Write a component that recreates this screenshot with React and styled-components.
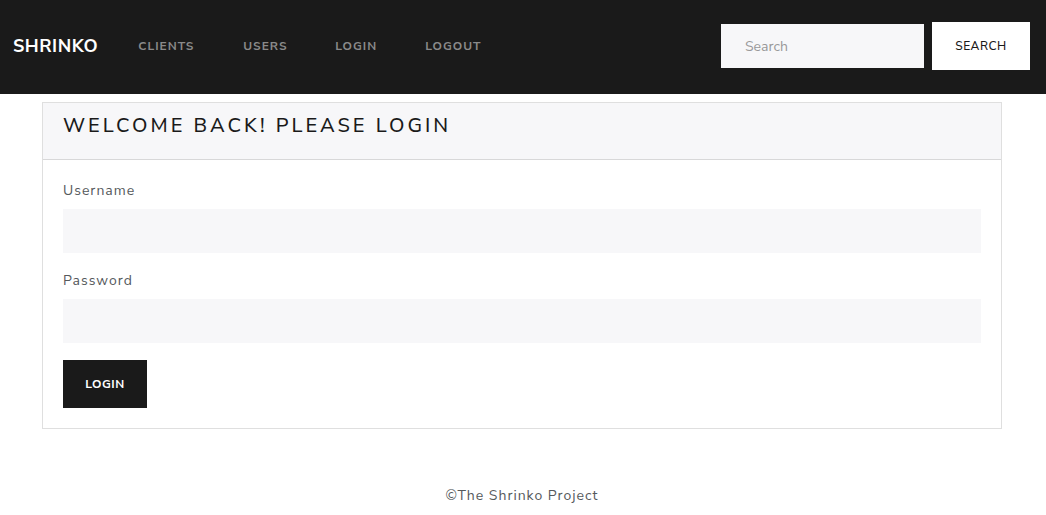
import React from "react";
import styled, { createGlobalStyle } from "styled-components";

const Global = createGlobalStyle`
  html, body { margin: 0; padding: 0; background: #fff; }
  body { font-family: "Nunito Sans", Lato, "Noto Sans", sans-serif; color: #55595c; }
  * { box-sizing: border-box; }
`;

const NavBar = styled.nav`
  height: 94px;
  background: #1a1a1a;
  display: flex;
  align-items: center;
  padding: 0 16px 2px 13px;
`;

const Brand = styled.a`
  color: #fff;
  font-size: 18px;
  font-weight: 700;
  letter-spacing: 0.5px;
  text-decoration: none;
  margin-right: 40px;
`;

const NavList = styled.ul`
  display: flex;
  list-style: none;
  margin: 0;
  padding: 0;
  flex: 1;
`;

const NavLink = styled.a`
  display: block;
  color: #8a8a8a;
  font-size: 12px;
  font-weight: 700;
  letter-spacing: 1px;
  text-transform: uppercase;
  text-decoration: none;
  width: ${(p) => p.$w}px;
`;

const SearchForm = styled.form`
  display: flex;
  align-items: center;
  gap: 8px;
`;

const SearchInput = styled.input`
  width: 203px;
  height: 44px;
  border: none;
  outline: none;
  background: #f7f7f9;
  padding: 0 24px;
  font-family: inherit;
  font-size: 14px;
  color: #55595c;
  &::placeholder { color: #999; }
`;

const SearchButton = styled.button`
  width: 98px;
  height: 48px;
  border: none;
  background: #fff;
  color: #1a1a1a;
  font-family: inherit;
  font-size: 12px;
  font-weight: 500;
  letter-spacing: 0.5px;
`;

const Container = styled.main`
  width: 960px;
  margin: 8px auto 0 42px;
`;

const Card = styled.section`
  border: 1px solid rgba(0, 0, 0, 0.125);
  background: #fff;
`;

const CardHeader = styled.div`
  height: 57px;
  background: #f7f7f9;
  border-bottom: 1px solid rgba(0, 0, 0, 0.125);
  padding: 11px 20px 0;
`;

const Title = styled.h3`
  margin: 0;
  font-size: 20px;
  line-height: 24px;
  font-weight: 500;
  letter-spacing: 3px;
  color: #1a1a1a;
  text-transform: uppercase;
`;

const CardBody = styled.div`
  padding: 21px 20px 20px;
`;

const Field = styled.div`
  margin-bottom: 17px;
  & + & { padding-top: 1px; }
`;

const Label = styled.label`
  display: block;
  font-size: 14px;
  letter-spacing: 1px;
  color: #55595c;
  margin-bottom: 9px;
`;

const Input = styled.input`
  display: block;
  width: 100%;
  height: 44px;
  border: none;
  outline: none;
  background: #f7f7f9;
  padding: 0 24px;
  font-family: inherit;
  font-size: 14px;
`;

const LoginButton = styled.button`
  display: block;
  width: 84px;
  height: 48px;
  border: none;
  background: #1a1a1a;
  color: #fff;
  font-family: inherit;
  font-size: 12px;
  font-weight: 700;
  letter-spacing: 0.5px;
`;

const Footer = styled.footer`
  text-align: center;
  margin-top: 57px;
  font-size: 14px;
  letter-spacing: 1px;
  color: #55595c;
`;

const links = [
  ["Clients", 105],
  ["Users", 92],
  ["Login", 90],
  ["Logout", 90],
];

export default function App() {
  return (
    <>
      <Global />
      <NavBar>
        <Brand href="#">SHRINKO</Brand>
        <NavList>
          {links.map(([t, w]) => (
            <li key={t}>
              <NavLink href="#" $w={w}>{t}</NavLink>
            </li>
          ))}
        </NavList>
        <SearchForm onSubmit={(e) => e.preventDefault()}>
          <SearchInput placeholder="Search" />
          <SearchButton type="submit">SEARCH</SearchButton>
        </SearchForm>
      </NavBar>
      <Container>
        <Card>
          <CardHeader>
            <Title>Welcome back! Please login</Title>
          </CardHeader>
          <CardBody>
            <Field>
              <Label>Username</Label>
              <Input type="text" />
            </Field>
            <Field>
              <Label>Password</Label>
              <Input type="password" />
            </Field>
            <LoginButton type="submit">LOGIN</LoginButton>
          </CardBody>
        </Card>
        <Footer>©The Shrinko Project</Footer>
      </Container>
    </>
  );
}
